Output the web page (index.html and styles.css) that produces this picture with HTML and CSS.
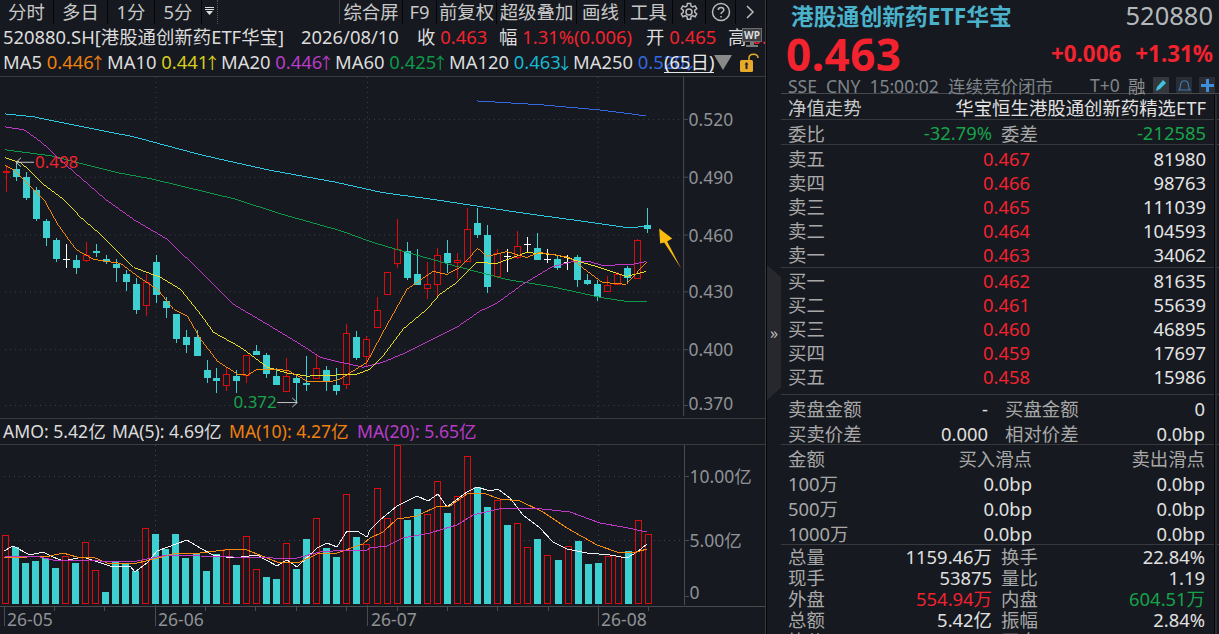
FILE: index.html
```html
<!DOCTYPE html>
<html lang="zh-CN">
<head>
    <meta charset="UTF-8">
    <title>520880 港股通创新药ETF华宝</title>
    <link rel="stylesheet" href="styles.css">
</head>
<body>
<div class="app">

    <!-- 左边 K线区 -->
    <div class="left">
        <div class="toolbar">
            <div class="tb w54">分时</div>
            <div class="tb w54">多日</div>
            <div class="tb w47">1分</div>
            <div class="tb w47">5分</div>
            <div class="tb-more">
                <svg width="10" height="10" viewBox="0 0 10 10"><path d="M0 1h9v1H0zM0 3h9v1H0zM1 5h7L4.500 9z" fill="#ddd"/></svg>
            </div>
            <div class="tb-space"></div>
            <div class="tb w63">综合屏</div>
            <div class="tb w34">F9</div>
            <div class="tb w60">前复权</div>
            <div class="tb w80">超级叠加</div>
            <div class="tb w48">画线</div>
            <div class="tb w48">工具</div>
            <div class="tb w33">
                <svg width="20" height="20" viewBox="0 0 20 20" fill="none" stroke="#bbb" stroke-width="1.500"><path d="M8.400 1.500h3.200l.5 2.600 1.600.8 2.400-1 1.600 2.800-2 1.700v1.800l2 1.700-1.600 2.800-2.400-1-1.600.9-.5 2.600H8.400l-.5-2.600-1.600-.9-2.400 1-1.600-2.800 2-1.700V8.400l-2-1.700 1.600-2.800 2.400 1 1.600-.8z"/><circle cx="10" cy="10" r="3"/></svg>
            </div>
            <div class="tb w30">
                <svg width="20" height="20" viewBox="0 0 20 20" fill="none" stroke="#bbb" stroke-width="1.500"><circle cx="10" cy="10" r="8.500"/><path d="M7.300 8c0-3.400 5.500-3.400 5.500 0 0 2-2.800 2-2.800 4"/><path d="M10 14v1.600"/></svg>
            </div>
            <div class="tb w29">
                <svg width="9" height="14" viewBox="0 0 9 14" fill="none" stroke="#bbb" stroke-width="1.500"><path d="M1 1l6 6-6 6"/></svg>
            </div>
        </div>

        <div class="info">
            <span class="info-name">520880.SH[港股通创新药ETF华宝]</span>
            <span class="info-date">2026/08/10</span>
            <span class="info-a">收 <b class="up">0.463</b></span>
            <span class="info-b">幅 <b class="up">1.31%(0.006)</b></span>
            <span class="info-c">开 <b class="up">0.465</b></span>
            <span class="info-d">高 <b class="up">0.475</b></span>
            <svg class="wp" width="20" height="20" viewBox="0 0 20 20"><path d="M0 0h20v14H0z" fill="#6a6c70"/><path d="M1 1h18v12H1z" fill="#3c3e43"/><path d="M8 14h4v3H8zM4 17h12v2H4z" fill="#77797c"/><text x="10" y="11" class="wp-text">WP</text></svg>
        </div>

        <div class="ma-row">
            <span class="ma w104">MA5 <b class="c-orange">0.446<i class="arw">↑</i></b></span>
            <span class="ma w114">MA10 <b class="c-yellow">0.441<i class="arw">↑</i></b></span>
            <span class="ma w114">MA20 <b class="c-purple">0.446<i class="arw">↑</i></b></span>
            <span class="ma w114">MA60 <b class="c-green">0.425<i class="arw">↑</i></b></span>
            <span class="ma w124">MA120 <b class="c-cyan">0.463<i class="arw">↓</i></b></span>
            <span class="ma">MA250 <b class="c-blue">0.520<i class="arw">↓</i></b></span>
            <span class="period">(65日)</span>
            <span class="tri"></span>
            <svg class="lock" width="20" height="20" viewBox="0 0 20 20"><path d="M9 8V5c0-5 9-5 9 0" fill="none" stroke="#e8a92a" stroke-width="1.500"/><rect x="0" y="7" width="13" height="12" rx="1.500" fill="#e8a92a"/><path d="M5.500 11h2v5h-2z" fill="#222"/><path d="M4.500 11.500h4L6.500 9z" fill="#222"/></svg>
        </div>

        <svg id="kline" class="pane-main" width="766" height="342" viewBox="0 77 766 342"></svg>

        <div class="amo-row">
            <span class="amo-a">AMO: 5.42亿</span>
            <span class="amo-b">MA(5): 4.69亿</span>
            <span class="amo-c c-orange">MA(10): 4.27亿</span>
            <span class="c-purple">MA(20): 5.65亿</span>
        </div>

        <svg id="volume" class="pane-vol" width="766" height="189" viewBox="0 445 766 189"></svg>
    </div>

    <div class="divider"><div class="handle">»</div></div>

    <!-- 右边 盘口 -->
    <div class="right">
        <div class="quote">
            <div class="q-title">
                <span class="q-name">港股通创新药ETF华宝</span>
                <span class="q-code">520880</span>
            </div>
            <div class="q-price">
                <span class="q-last">0.463</span>
                <span class="q-chg">+0.006</span>
                <span class="q-chg q-pct">+1.31%</span>
            </div>
            <div class="q-status">
                <span class="q-time">SSE&nbsp; CNY&nbsp; 15:00:02&nbsp; 连续竞价闭市</span>
                <span class="q-t0">T+0</span>
                <span class="q-rong">融</span>
                <span class="q-btn q-btn-on">
                    <svg width="13" height="13" viewBox="0 0 13 13"><path d="M1 12l1-4 6-7 3 3-6 6z" fill="#3fc4de"/></svg>
                </span>
                <span class="q-btn">
                    <svg width="13" height="13" viewBox="0 0 13 13" fill="none" stroke="#3a7bb5" stroke-width="1.200"><path d="M1 11c2-2 1-5 2-7 1-3 6-3 7 0 1 2 0 5 2 7z"/></svg>
                </span>
                <span class="q-btn">
                    <svg width="13" height="13" viewBox="0 0 13 13"><path d="M5 0h3v5h5v3H8v5H5V8H0V5h5z" fill="#3d8fdc"/></svg>
                </span>
            </div>
        </div>

        <div class="row-nav line">
            <span class="lab-light">净值走势</span>
            <span>华宝恒生港股通创新药精选ETF</span>
        </div>
        <div class="row-wb line">
            <span class="lab">委比</span>
            <span class="wb-val down">-32.79%</span>
            <span class="lab wb-lab">委差</span>
            <span class="wb-end down">-212585</span>
        </div>

        <div class="book book-sell line">
            <div class="book-row"><span class="lab">卖五</span><span class="up">0.467</span><span>81980</span></div>
            <div class="book-row"><span class="lab">卖四</span><span class="up">0.466</span><span>98763</span></div>
            <div class="book-row"><span class="lab">卖三</span><span class="up">0.465</span><span>111039</span></div>
            <div class="book-row"><span class="lab">卖二</span><span class="up">0.464</span><span>104593</span></div>
            <div class="book-row"><span class="lab">卖一</span><span class="up">0.463</span><span>34062</span></div>
        </div>
        <div class="book book-buy line">
            <div class="book-row"><span class="lab">买一</span><span class="up">0.462</span><span>81635</span></div>
            <div class="book-row"><span class="lab">买二</span><span class="up">0.461</span><span>55639</span></div>
            <div class="book-row"><span class="lab">买三</span><span class="up">0.460</span><span>46895</span></div>
            <div class="book-row"><span class="lab">买四</span><span class="up">0.459</span><span>17697</span></div>
            <div class="book-row"><span class="lab">买五</span><span class="up">0.458</span><span>15986</span></div>
        </div>

        <div class="money line">
            <div class="money-row"><span class="lab">卖盘金额</span><span class="num">-</span><span class="lab">买盘金额</span><span class="num">0</span></div>
            <div class="money-row"><span class="lab">买卖价差</span><span class="num">0.000</span><span class="lab">相对价差</span><span class="num">0.0bp</span></div>
        </div>

        <div class="slip line">
            <div class="slip-row"><span class="lab">金额</span><span class="lab num">买入滑点</span><span class="lab num">卖出滑点</span></div>
            <div class="slip-row"><span class="lab">100万</span><span class="num">0.0bp</span><span class="num">0.0bp</span></div>
            <div class="slip-row"><span class="lab">500万</span><span class="num">0.0bp</span><span class="num">0.0bp</span></div>
            <div class="slip-row"><span class="lab">1000万</span><span class="num">0.0bp</span><span class="num">0.0bp</span></div>
        </div>

        <div class="stats">
            <div class="stat-row"><span class="lab">总量</span><span class="num">1159.46万</span><span class="lab">换手</span><span class="num">22.84%</span></div>
            <div class="stat-row"><span class="lab">现手</span><span class="num">53875</span><span class="lab">量比</span><span class="num">1.19</span></div>
            <div class="stat-row"><span class="lab">外盘</span><span class="num up">554.94万</span><span class="lab">内盘</span><span class="num down">604.51万</span></div>
            <div class="stat-row"><span class="lab">总额</span><span class="num">5.42亿</span><span class="lab">振幅</span><span class="num">2.84%</span></div>
            <div class="stat-row"><span class="lab">均价</span><span class="num up">0.467</span><span class="lab">开盘</span><span class="num up">0.465</span></div>
        </div>
        <div class="scrollbar"></div>
    </div>
</div>

<script src="chart.js"></script>
</body>
</html>
```

FILE: styles.css
```css
* { box-sizing: border-box; }
html, body { margin: 0; height: 100%; overflow: hidden; }
body { background: #16191f; color: #dcdcdc; font-family: "Noto Sans", "Noto Sans CJK SC", sans-serif; font-size: 18.400px; }
b { font-weight: normal; }
svg { display: block; }

.app { display: flex; width: 1219px; height: 634px; overflow: hidden; }
.left { width: 766px; flex: none; border-right: 1px solid #3a3b3f; overflow: hidden; }
.divider { width: 15px; flex: none; border-left: 1px solid #050505; }
.right { width: 438px; flex: none; position: relative; }

.up { color: #f2232f; }
.down { color: #16a34a; }
.c-orange { color: #f08010; }
.c-yellow { color: #d6cc1c; }
.c-purple { color: #b83cc8; }
.c-green { color: #0d9a48; }
.c-cyan { color: #19b8d0; }
.c-blue { color: #3568e0; }

/* 工具栏 */
.toolbar { display: flex; height: 26px; }
.tb { display: flex; flex: none; align-items: center; justify-content: center; height: 24px; border-right: 1px solid #050505; color: #c8c8c8; line-height: 24px; }
.tb-more { flex: none; width: 16px; padding: 6px 0 0 3px; border-right: 1px dotted #555; height: 24px; }
.tb-space { flex: 1; border-right: 1px solid #3a3b3f; height: 24px; }
.w29 { width: 29px; border-right: none; }
.w30 { width: 30px; }
.w33 { width: 33px; }
.w34 { width: 34px; }
.w47 { width: 47px; }
.w48 { width: 48px; }
.w54 { width: 54px; }
.w60 { width: 60px; }
.w63 { width: 63px; }
.w80 { width: 80px; }

/* 行情信息 */
.info { display: flex; width: 900px; height: 24px; line-height: 22px; white-space: nowrap; padding-left: 3px; position: relative; }
.info span { flex: none; }
.info-name { width: 298px; }
.info-date { width: 116px; }
.info-a { width: 82px; }
.info-b { width: 147px; }
.info-c { width: 82px; }
.wp { position: absolute; left: 742px; top: 2px; }
.wp-text { font-size: 10px; font-weight: bold; fill: #ddd; text-anchor: middle; }

.ma-row { display: flex; height: 27px; line-height: 24px; padding-left: 3px; white-space: nowrap; border-bottom: 1px solid #3a3b3f; position: relative; }
.ma { flex: none; }
.w104 { width: 104px; }
.w114 { width: 114px; }
.w124 { width: 124px; }
.arw { display: inline-block; width: 7px; font-style: normal; font-size: 16px; text-indent: -4px; }
.period { position: absolute; left: 664px; top: 0; height: 23px; line-height: 24px; color: #e8e8e8; border-bottom: 1px solid #e8e8e8; }
.tri { position: absolute; left: 714px; top: 5px; border-left: 9px solid transparent; border-right: 9px solid transparent; border-top: 15px solid #8a8a8a; }
.lock { position: absolute; left: 740px; top: 3px; }

.pane-main { border-bottom: 1px solid #3a3b3f; }
.amo-row { display: flex; height: 26px; font-size: 17.600px; line-height: 24px; padding-left: 3px; white-space: nowrap; border-bottom: 1px solid #3a3b3f; }
.amo-row span { flex: none; }
.amo-a { width: 109px; }
.amo-b { width: 117px; }
.amo-c { width: 128px; }

/* 中间折叠条 */
.handle { margin-top: 265px; height: 135px; width: 14px; background: #26282d; color: #bbb; display: flex; align-items: center; justify-content: center; font-size: 16px; clip-path: polygon(0 0, 100% 9%, 100% 91%, 0 100%); }

/* 右边盘口 */
.quote { height: 94px; border-bottom: 1px solid #48494d; }
.q-title { display: flex; justify-content: space-between; align-items: center; height: 30px; padding: 0 6px 0 10px; }
.q-name { font-size: 22.800px; font-weight: bold; color: #4bb2cb; }
.q-code { font-size: 25.500px; color: #b4b8bb; }
.q-price { display: flex; align-items: center; height: 47px; padding: 0 6px 0 5px; color: #f2232f; }
.q-last { font-size: 44px; font-weight: bold; margin-right: auto; letter-spacing: 0.500px; }
.q-chg { font-size: 22.400px; font-weight: bold; }
.q-pct { margin-left: 14px; }
.q-status { display: flex; align-items: center; height: 16px; padding-left: 7px; color: #7f858a; font-size: 17.500px; white-space: nowrap; }
.q-time { width: 302px; flex: none; }
.q-t0 { width: 38px; flex: none; }
.q-rong { width: 25px; flex: none; color: #8f8f8f; }
.q-btn { width: 16px; height: 16px; flex: none; margin-right: 7px; background: #2a2d33; display: flex; align-items: center; justify-content: center; }
.q-btn-on { background: #34383e; }

.line { border-bottom: 1px solid #38393d; }
.lab { color: #a8a8a8; }
.lab-light { color: #c8c8c8; }
.num { text-align: right; }

.row-nav { display: flex; justify-content: space-between; align-items: center; height: 26px; padding: 1px 13px 0 7px; color: #e0e0e0; }
.row-wb { display: flex; align-items: center; height: 25px; padding: 1px 13px 0 7px; }
.wb-val { width: 184px; text-align: right; }
.wb-lab { margin-left: 9px; }
.wb-end { margin-left: auto; }
.row-wb .lab:first-child { width: 20px; flex: none; white-space: nowrap; }

.book { padding: 2px 13px 0 7px; }
.book-sell { height: 123px; }
.book-buy { height: 127px; padding-top: 1px; }
.book-row { display: grid; grid-template-columns: 0 242px 176px; height: 24px; line-height: 24px; text-align: right; color: #e4e4e4; }
.book-row .lab { text-align: left; white-space: nowrap; width: 0; }

.money { height: 50px; padding: 1px 14px 0 7px; }
.money-row { display: grid; grid-template-columns: 90px 110px 17px 90px 1fr; height: 25px; line-height: 25px; white-space: nowrap; color: #e0e0e0; }
.money-row .lab:first-child { grid-column: 1; }
.money-row .num:nth-child(2) { grid-column: 2; }
.money-row .lab:nth-child(3) { grid-column: 4; }
.money-row .num:nth-child(4) { grid-column: 5; }

.slip { height: 100px; padding: 1px 14px 0 7px; }
.slip-row { display: grid; grid-template-columns: 60px 184px 1fr; height: 25px; line-height: 25px; color: #e0e0e0; white-space: nowrap; }

.stats { padding: 1px 14px 0 7px; }
.stat-row { display: grid; grid-template-columns: 40px 164px 9px 40px 1fr; height: 21px; line-height: 21px; white-space: nowrap; color: #e0e0e0; }
.stat-row .lab:first-child { grid-column: 1; }
.stat-row .num:nth-child(2) { grid-column: 2; }
.stat-row .lab:nth-child(3) { grid-column: 4; }
.stat-row .num:nth-child(4) { grid-column: 5; }

.scrollbar { position: absolute; right: 2px; top: 95px; bottom: 0; width: 3px; background: #2b2d32; border-left: 1px solid #050505; }

/* 图表里的元素 */
.grid { stroke: #3f4247; stroke-width: 1; stroke-dasharray: 1 4; fill: none; }
.axis { stroke: #4a4b4f; stroke-width: 1; fill: none; }
.wick, .bar { shape-rendering: crispEdges; }
.line-ma { fill: none; stroke-width: 1; shape-rendering: crispEdges; }
.axis-text { fill: #8f9296; font-size: 17.500px; }
.date-text { fill: #8f9296; font-size: 17.500px; }
.note-up { fill: #f2232f; font-size: 17px; }
.note-down { fill: #16a34a; font-size: 17px; }
.note-arrow { fill: none; stroke: #c4c4c4; stroke-width: 1; }
```

FILE: chart.js
```js
// 每根K线: [高, 低, 实体上, 实体下, 颜色] 都是屏幕y坐标. c青 r红 w白
const candles = [
    [165,192,171,172,'r'],[162,181,169,177,'c'],[172,200,177,198,'c'],[187,221,190,219,'c'],[219,246,221,238,'c'],
    [238,263,240,260,'c'],[244,269,260,260,'w'],[256,275,261,269,'c'],[242,263,256,261,'r'],[244,258,252,254,'c'],
    [256,265,260,263,'c'],[260,283,265,269,'c'],[271,292,275,283,'c'],[279,315,285,311,'c'],[275,317,283,306,'r'],
    [256,304,263,296,'c'],[298,319,302,309,'c'],[315,344,315,340,'c'],[331,354,338,346,'c'],[331,357,338,357,'c'],
    [361,384,371,379,'c'],[369,394,379,382,'c'],[369,392,375,386,'r'],[371,394,377,382,'c'],[356,384,356,376,'r'],
    [346,356,352,356,'c'],[354,379,356,375,'c'],[369,386,377,386,'c'],[359,392,377,392,'r'],[376,404,379,384,'c'],
    [357,392,384,386,'c'],[356,379,369,379,'r'],[367,392,371,382,'c'],[369,396,386,392,'c'],[325,390,334,385,'r'],
    [332,361,338,359,'c'],[337,367,340,357,'r'],[298,328,311,328,'r'],[273,295,273,295,'r'],[219,269,250,264,'r'],
    [242,281,252,279,'c'],[250,286,275,286,'c'],[263,300,285,289,'r'],[248,297,256,285,'r'],[240,274,254,264,'c'],
    [254,280,261,263,'r'],[208,262,229,262,'r'],[208,238,223,235,'c'],[225,294,235,288,'c'],[250,277,254,277,'r'],
    [250,273,257,257,'w'],[231,260,246,258,'r'],[237,253,244,244,'w'],[233,261,248,261,'c'],[250,264,260,260,'w'],
    [256,271,260,269,'c'],[256,271,263,263,'w'],[256,288,258,281,'c'],[275,286,281,285,'c'],[281,302,285,298,'c'],
    [277,292,286,292,'r'],[273,285,275,285,'r'],[267,285,269,279,'c'],[239,279,240,279,'r'],[208,233,225,229,'c']
];

// 成交量柱顶部y, 以及哪些柱子是红的
const volTops = [535,547,563,561,558,568,556,563,542,570,592,561,564,571,528,534,549,534,558,553,571,554,549,565,536,569,577,579,543,569,539,518,548,557,494,537,544,488,518,445,520,509,514,481,513,496,456,487,507,500,525,523,547,539,555,560,546,541,564,563,556,556,551,520,534];
const volRed = [0,6,8,9,14,22,24,25,28,31,34,36,37,38,39,42,43,45,46,49,51,52,54,56,60,61,63,64];

const maLines = [
    { color: '#2cc8e0', pts: [[4,114],[33,117],[67,124],[133,137],[200,155],[267,170],[333,182],[383,193],[435,200],[520,213],[593,223],[627,228],[648,227]] },
    { color: '#3568e0', pts: [[477,101],[543,105],[600,110],[647,116]] },
    { color: '#0d9a48', pts: [[4,150],[50,156],[117,173],[150,179],[233,199],[283,215],[340,231],[373,243],[397,250],[457,267],[507,280],[550,287],[600,298],[627,302],[648,302]] },
    { color: '#c03ac8', pts: [[4,127],[23,130],[40,142],[67,167],[105,200],[133,220],[167,240],[213,285],[233,305],[267,325],[300,345],[320,358],[340,363],[363,368],[383,363],[407,353],[457,328],[480,312],[497,304],[523,285],[553,267],[573,262],[590,262],[603,266],[633,265],[647,262]] },
    { color: '#e8dc2c', pts: [[4,158],[20,163],[43,185],[63,200],[80,218],[100,235],[117,252],[133,268],[160,278],[180,290],[200,315],[213,333],[240,348],[267,368],[287,374],[307,377],[333,376],[357,375],[370,370],[383,357],[403,330],[427,310],[440,295],[457,283],[477,263],[497,264],[527,253],[553,255],[573,260],[600,268],[627,277],[647,272]] },
    { color: '#f58a10', pts: [[4,166],[13,170],[33,190],[43,200],[57,225],[75,250],[93,260],[120,264],[137,277],[157,290],[173,310],[187,317],[200,340],[217,362],[237,375],[247,376],[257,370],[287,371],[307,382],[333,382],[340,380],[367,363],[383,333],[407,290],[433,272],[447,275],[460,268],[478,249],[488,257],[507,252],[527,258],[540,253],[570,258],[583,268],[603,283],[627,285],[647,263]] }
];

const volLines = [
    { color: '#f0f0f0', pts: [[4,551],[13,546],[30,555],[43,552],[53,557],[63,561],[83,557],[110,566],[130,566],[135,572],[147,563],[157,551],[187,540],[200,548],[213,555],[233,558],[257,555],[277,566],[287,560],[297,567],[317,548],[327,543],[337,547],[347,531],[357,531],[367,537],[370,530],[380,520],[397,506],[417,496],[428,501],[438,494],[447,507],[467,492],[477,487],[490,491],[498,489],[510,498],[523,515],[540,528],[553,542],[567,549],[587,553],[610,555],[627,558],[637,552],[647,544]] },
    { color: '#f58a10', pts: [[4,558],[50,556],[63,553],[77,557],[93,557],[107,563],[133,564],[150,560],[173,554],[200,553],[233,549],[247,550],[277,562],[300,562],[317,554],[337,553],[363,544],[370,538],[383,532],[397,519],[417,516],[438,506],[450,506],[467,494],[483,493],[500,499],[520,501],[543,512],[567,528],[597,545],[617,552],[633,553],[647,549]] },
    { color: '#c03ac8', pts: [[4,556],[40,557],[57,561],[90,560],[100,561],[137,561],[167,555],[200,556],[233,557],[273,558],[297,558],[320,552],[347,550],[367,550],[370,548],[387,546],[403,538],[430,533],[443,529],[457,525],[473,515],[503,508],[533,508],[570,512],[600,523],[623,527],[647,532]] }
];

function candleX(i) {
    return Math.round(4.5 + i * 10.055);
}

function poly(pts, color) {
    const p = pts.map(pt => pt.join(',')).join(' ');
    return `<polyline class="line-ma" points="${p}" stroke="${color}"/>`;
}

function drawCandle(c, i) {
    const x = candleX(i);
    const colors = { c: '#3ecfd0', r: '#dc0c0c', w: '#ffffff' };
    const col = colors[c[4]];
    let s = `<rect class="wick" x="${x}" y="${c[0]}" width="1" height="${c[1] - c[0]}" fill="${col}"/>`;
    if (c[4] === 'w') {
        s += `<rect class="bar" x="${x - 3}" y="${c[2]}" width="7" height="1" fill="${col}"/>`;
    } else if (c[4] === 'c') {
        s += `<rect class="bar" x="${x - 3}" y="${c[2]}" width="7" height="${c[3] - c[2]}" fill="${col}"/>`;
    } else {
        s += `<rect class="bar" x="${x - 3}" y="${c[2]}" width="7" height="${c[3] - c[2] + 1}" fill="#16191f"/>`;
        s += `<rect class="bar" x="${x - 2.5}" y="${c[2] + 0.5}" width="6" height="${c[3] - c[2]}" fill="none" stroke="${col}"/>`;
    }
    return s;
}

function hGrid(y) {
    return `<line class="grid" x1="4" y1="${y}.5" x2="684" y2="${y}.5"/>`;
}

function vGrid(x, y1, y2) {
    return `<line class="grid" x1="${x}.5" y1="${y1}" x2="${x}.5" y2="${y2}"/>`;
}

function drawMain() {
    let s = '';
    [155, 367, 598].forEach(x => { s += vGrid(x, 77, 418); });
    const ticks = [[119, '0.520'], [177, '0.490'], [235, '0.460'], [292, '0.430'], [350, '0.400'], [406, '0.370']];
    ticks.forEach(t => {
        s += hGrid(t[0]);
        s += `<line class="axis" x1="684" y1="${t[0]}.5" x2="689" y2="${t[0]}.5"/>`;
        const ty = t[0] === 406 ? 411 : t[0] + 7;
        s += `<text class="axis-text" x="689.5" y="${ty}">${t[1]}</text>`;
    });
    s += '<line class="axis" x1="684.5" y1="77" x2="684.5" y2="417"/>';
    candles.forEach((c, i) => { s += drawCandle(c, i); });
    maLines.forEach(l => { s += poly(l.pts, l.color); });

    // 最高最低标注
    s += '<path class="note-arrow" d="M33 162.500H15M20 158l-5 4.500 5 4.500"/>';
    s += '<text class="note-up" x="34" y="168">0.498</text>';
    s += '<path class="note-arrow" d="M277 403.500H297M292 399l5 4.500-5 4.500"/>';
    s += '<text class="note-down" x="233" y="409">0.372</text>';
    s += '<polygon points="660,229 673,239 668,242 682,269 665,243 661,244" fill="#fbbc10"/>';
    document.getElementById('kline').innerHTML = s;
}

function drawVolume() {
    let s = '';
    [155, 367, 598].forEach(x => { s += vGrid(x, 445, 606); });
    [476, 540].forEach(y => { s += hGrid(y); });
    [[476, '10.00亿', 483], [540, '5.00亿', 547], [596, '0', 599]].forEach(t => {
        s += `<line class="axis" x1="684" y1="${t[0]}.5" x2="689" y2="${t[0]}.5"/>`;
        s += `<text class="axis-text" x="689.5" y="${t[2]}">${t[1]}</text>`;
    });
    s += '<line class="axis" x1="684.5" y1="445" x2="684.5" y2="605"/>';
    volTops.forEach((top, i) => {
        const x = candleX(i);
        if (volRed.includes(i)) {
            s += `<rect class="bar" x="${x - 2.5}" y="${top + 0.5}" width="6" height="${603 - top}" fill="#16191f" stroke="#dc0c0c"/>`;
        } else {
            s += `<rect class="bar" x="${x - 3}" y="${top}" width="7" height="${604 - top}" fill="#3ecfd0"/>`;
        }
    });
    volLines.forEach(l => { s += poly(l.pts, l.color); });

    // 时间轴
    s += '<line class="axis" x1="0" y1="606.500" x2="766" y2="606.500"/>';
    [54, 104, 205, 255, 296, 346, 397, 447, 497, 548, 648].forEach(x => {
        s += `<line class="axis" x1="${x}.5" y1="606" x2="${x}.5" y2="611"/>`;
    });
    [4, 155, 367, 598].forEach(x => {
        s += `<line class="axis" x1="${x}.5" y1="606" x2="${x}.5" y2="626"/>`;
    });
    [[7, '26-05'], [158, '26-06'], [371, '26-07'], [601, '26-08']].forEach(t => {
        s += `<text class="date-text" x="${t[0]}" y="626">${t[1]}</text>`;
    });
    document.getElementById('volume').innerHTML = s;
}

drawMain();
drawVolume();
```
